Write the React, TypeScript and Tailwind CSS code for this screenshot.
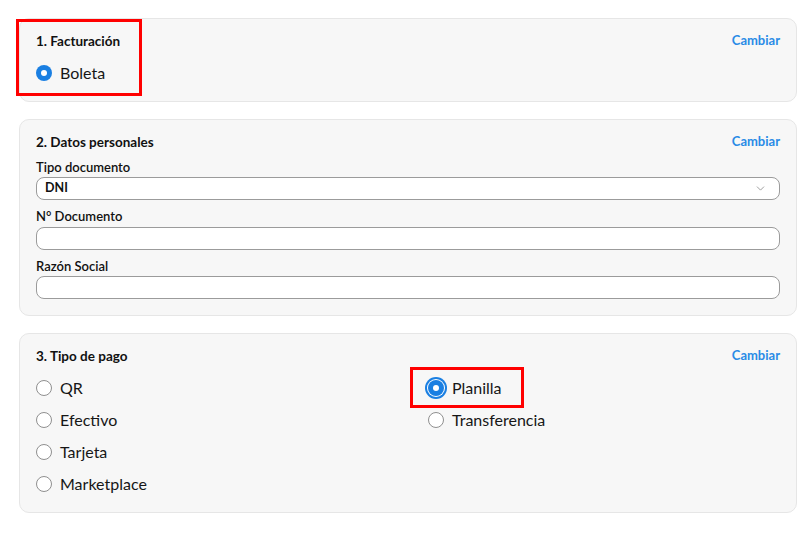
import { ChevronDown } from "lucide-react";

type Option = { label: string; selected?: boolean; focused?: boolean };

const pagosIzq: Option[] = [
  { label: "QR" },
  { label: "Efectivo" },
  { label: "Tarjeta" },
  { label: "Marketplace" },
];

const pagosDer: Option[] = [
  { label: "Planilla", selected: true, focused: true },
  { label: "Transferencia" },
];

const Radio = ({ selected, focused }: { selected?: boolean; focused?: boolean }) => (
  <span
    className={`w-4 h-4 rounded-full flex items-center justify-center shrink-0 ${
      selected ? "bg-[#1a7fe2]" : "bg-white border border-[#8f8f8f]"
    } ${focused ? "ring-2 ring-[#1a7fe2] ring-offset-1 ring-offset-white" : ""}`}
  >
    {selected && <span className="w-[6px] h-[6px] rounded-full bg-white" />}
  </span>
);

const RadioRow = ({ opt }: { opt: Option }) => (
  <div className="relative h-6 flex items-center gap-2">
    <Radio selected={opt.selected} focused={opt.focused} />
    <span className="text-[16px] leading-none pb-[1px] text-[#161616]">{opt.label}</span>
    {opt.focused && (
      <span className="absolute left-[-18px] top-[-9px] w-[114px] h-[41px] border-[3px] border-[#ff0000] pointer-events-none" />
    )}
  </div>
);

const CardHeader = ({ title }: { title: string }) => (
  <div className="h-4 flex items-center justify-between">
    <h2 className="text-[13.5px] font-bold text-[#111]">{title}</h2>
    <button className="text-[13px] font-bold text-[#2a8be6]">Cambiar</button>
  </div>
);

const Card = ({ children }: { children: React.ReactNode }) => (
  <div className="relative border border-[#e6e6e6] rounded-[10px] bg-[#f7f7f7] px-4 pt-[14px] pb-4">
    {children}
  </div>
);

const Label = ({ text, className }: { text: string; className: string }) => (
  <label className={`h-4 flex items-center text-[13px] font-semibold text-[#111] ${className}`}>{text}</label>
);

export default function App() {
  return (
    <div
      className="min-h-screen bg-white pl-[19px] pr-[12px] pt-[18px] flex flex-col gap-[17px]"
      style={{ fontFamily: "Lato, 'Noto Sans', sans-serif" }}
    >
      {/* 1. Facturación */}
      <Card>
        <span className="absolute left-[-4px] top-0 w-[126px] h-[77px] border-[3px] border-[#ff0000] pointer-events-none" />
        <CardHeader title="1. Facturación" />
        <div className="mt-3">
          <RadioRow opt={{ label: "Boleta", selected: true }} />
        </div>
      </Card>

      {/* 2. Datos personales */}
      <Card>
        <CardHeader title="2. Datos personales" />
        <Label text="Tipo documento" className="mt-[10px]" />
        <div className="mt-[1px] h-[23px] bg-white border border-[#9b9b9b] rounded-[8px] flex items-center justify-between pl-2 pr-3">
          <span className="text-[12.5px] font-bold text-[#111]">DNI</span>
          <ChevronDown size={13} strokeWidth={1.5} className="text-[#8a8a8a]" />
        </div>
        <Label text="N° Documento" className="mt-[9px]" />
        <div className="mt-[2px] h-[23px] bg-white border border-[#9b9b9b] rounded-[8px]" />
        <Label text="Razón Social" className="mt-[9px]" />
        <div className="mt-[1px] h-[23px] bg-white border border-[#9b9b9b] rounded-[8px]" />
      </Card>

      {/* 3. Tipo de pago */}
      <Card>
        <CardHeader title="3. Tipo de pago" />
        <div className="mt-3 grid grid-cols-[392px_1fr]">
          <div className="flex flex-col gap-2">
            {pagosIzq.map((p) => (
              <RadioRow key={p.label} opt={p} />
            ))}
          </div>
          <div className="flex flex-col gap-2">
            {pagosDer.map((p) => (
              <RadioRow key={p.label} opt={p} />
            ))}
          </div>
        </div>
      </Card>
    </div>
  );
}
